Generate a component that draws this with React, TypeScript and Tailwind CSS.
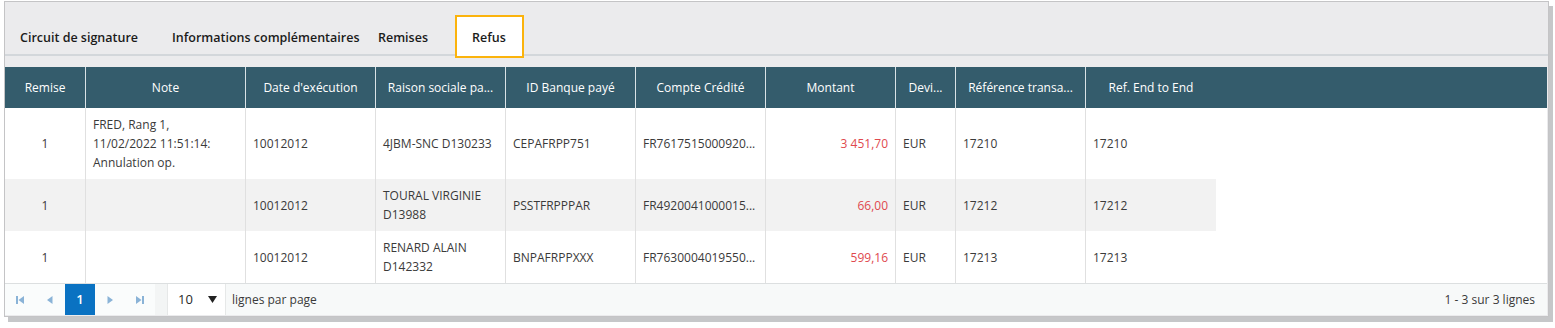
import React from 'react'

const font = { fontFamily: '"Open Sans", "Liberation Sans", sans-serif' }

type Col = { label: string; w: string; align: 'center' | 'left' | 'right' }

const cols: Col[] = [
  { label: 'Remise', w: 'w-[81px]', align: 'center' },
  { label: 'Note', w: 'w-[160px]', align: 'left' },
  { label: "Date d'exécution", w: 'w-[130px]', align: 'left' },
  { label: 'Raison sociale pa...', w: 'w-[130px]', align: 'left' },
  { label: 'ID Banque payé', w: 'w-[130px]', align: 'left' },
  { label: 'Compte Crédité', w: 'w-[130px]', align: 'left' },
  { label: 'Montant', w: 'w-[130px]', align: 'right' },
  { label: 'Devi...', w: 'w-[60px]', align: 'left' },
  { label: 'Référence transa...', w: 'w-[130px]', align: 'left' },
  { label: 'Ref. End to End', w: 'w-[130px]', align: 'left' },
]

const rows: string[][][] = [
  [
    ['1'],
    ['FRED, Rang 1,', '11/02/2022 11:51:14:', 'Annulation op.'],
    ['10012012'],
    ['4JBM-SNC D130233'],
    ['CEPAFRPP751'],
    ['FR7617515000920...'],
    ['3 451,70'],
    ['EUR'],
    ['17210'],
    ['17210'],
  ],
  [
    ['1'],
    [],
    ['10012012'],
    ['TOURAL VIRGINIE', 'D13988'],
    ['PSSTFRPPPAR'],
    ['FR4920041000015...'],
    ['66,00'],
    ['EUR'],
    ['17212'],
    ['17212'],
  ],
  [
    ['1'],
    [],
    ['10012012'],
    ['RENARD ALAIN', 'D142332'],
    ['BNPAFRPPXXX'],
    ['FR7630004019550...'],
    ['599,16'],
    ['EUR'],
    ['17213'],
    ['17213'],
  ],
]

const tabs = [
  { label: 'Circuit de signature', cls: 'w-[151px] pl-[15px]' },
  { label: 'Informations complémentaires', cls: 'w-[212px] pl-[16px]' },
  { label: 'Remises', cls: 'w-[87px] pl-[10px]' },
]

function PagerIcon({ kind }: { kind: 'first' | 'prev' | 'next' | 'last' }) {
  const c = '#8ab3d7'
  return (
    <svg width="10" height="10" viewBox="0 0 10 10">
      {kind === 'first' && (
        <>
          <rect x="1" y="1" width="2" height="8" fill={c} />
          <polygon points="9,1 9,9 3.5,5" fill={c} />
        </>
      )}
      {kind === 'prev' && <polygon points="7.5,1 7.5,9 2,5" fill={c} />}
      {kind === 'next' && <polygon points="2.5,1 2.5,9 8,5" fill={c} />}
      {kind === 'last' && (
        <>
          <polygon points="1,1 1,9 6.5,5" fill={c} />
          <rect x="7" y="1" width="2" height="8" fill={c} />
        </>
      )}
    </svg>
  )
}

export default function App() {
  return (
    <div className="w-[1555px] h-[328px] bg-white pt-[1px] pl-[4px]" style={font}>
      <div className="w-[1545px] h-[316px] border border-[#c4c4c6] bg-[#ebebed] shadow-[4px_5px_0_#c6c7c9] flex flex-col">
        {/* tabs */}
        <div className="flex pt-[13px] border-b-2 border-[#d3d7db]">
          {tabs.map((t) => (
            <div
              key={t.label}
              className={`${t.cls} h-[43px] -mb-[4px] pt-[3px] flex items-center text-[12.5px] font-semibold text-[#1b1b1b] whitespace-nowrap`}
            >
              {t.label}
            </div>
          ))}
          <div className="w-[69px] h-[43px] -mb-[4px] pt-[3px] border-2 border-[#fbb30c] bg-white pl-[15px] flex items-center text-[12.5px] font-semibold text-[#1b1b1b]">
            Refus
          </div>
        </div>

        {/* grid */}
        <div className="mt-[11px] mr-[1px] flex flex-col bg-white">
          <div className="flex h-[41px] bg-[#345c6c] text-white text-[12px]">
            {cols.map((c, i) => (
              <div
                key={c.label}
                className={`${c.w} shrink-0 flex items-center justify-center px-[6px] whitespace-nowrap ${
                  i < cols.length - 1 ? 'border-r border-[#d9e2e6]' : ''
                }`}
              >
                {c.label}
              </div>
            ))}
          </div>

          {rows.map((r, ri) => (
            <div key={ri} className="flex">
              <div className={`flex ${ri === 1 ? 'bg-[#f2f2f2]' : 'bg-white'}`}>
                {r.map((cell, ci) => {
                  const c = cols[ci]
                  return (
                    <div
                      key={ci}
                      className={`${c.w} shrink-0 flex flex-col justify-center px-[7px] py-[7px] text-[12px] leading-[19px] ${
                        ci < cols.length - 1 ? 'border-r border-[#e0e0e0]' : ''
                      } ${
                        c.align === 'center'
                          ? 'items-center text-[#3a3a3a]'
                          : c.align === 'right'
                            ? 'items-end text-[#e0494e]'
                            : 'items-start text-[#3a3a3a]'
                      }`}
                    >
                      {cell.map((l, li) => (
                        <span key={li} className="whitespace-nowrap">
                          {l}
                        </span>
                      ))}
                    </div>
                  )
                })}
              </div>
              <div className="flex-1 bg-white" />
            </div>
          ))}

          {/* pager */}
          <div className="h-[32px] border-t border-[#dcdfe0] bg-[#f7f9f9] flex items-center text-[12px] text-[#3a3a3a]">
            <div className="flex h-full bg-[#fafcfc]">
              <div className="w-[30px] flex items-center justify-center"><PagerIcon kind="first" /></div>
              <div className="w-[30px] flex items-center justify-center"><PagerIcon kind="prev" /></div>
              <div className="w-[30px] flex items-center justify-center bg-[#0a72c2] text-white font-semibold text-[13px]">1</div>
              <div className="w-[30px] flex items-center justify-center"><PagerIcon kind="next" /></div>
              <div className="w-[30px] flex items-center justify-center"><PagerIcon kind="last" /></div>
            </div>
            <div className="w-[12px] h-full bg-[#f3f5f5]" />
            <div className="w-[59px] h-full bg-white border-x border-[#e6e8e8] flex items-center justify-between pl-[10px] pr-[8px]">
              <span className="text-[13px] text-[#2a2a2a]">10</span>
              <svg width="9" height="7" viewBox="0 0 9 7">
                <polygon points="0,0 9,0 4.5,7" fill="#222" />
              </svg>
            </div>
            <span className="ml-[6px]">lignes par page</span>
            <span className="ml-auto mr-[12px]">1 - 3 sur 3 lignes</span>
          </div>
        </div>
      </div>
    </div>
  )
}
